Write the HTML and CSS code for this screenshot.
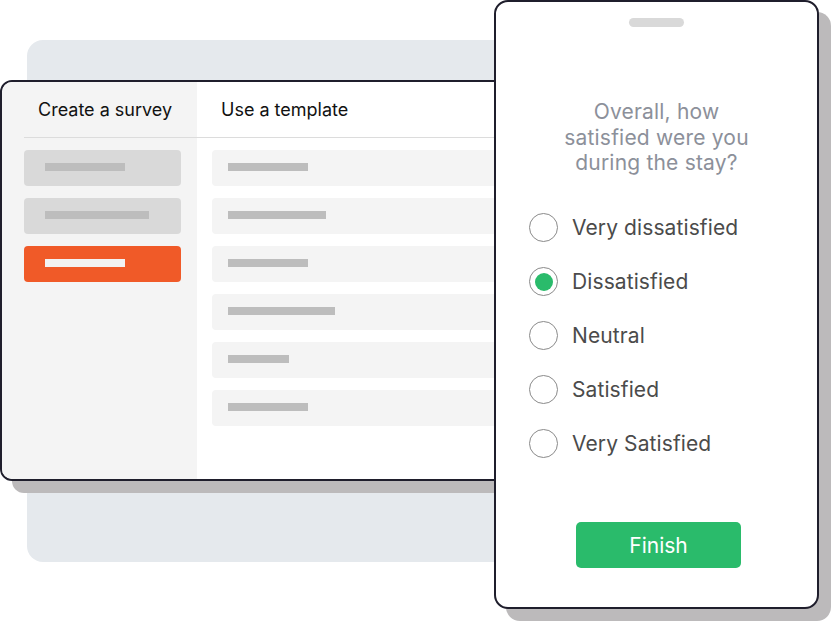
FILE: index.html
```html
<!DOCTYPE html>
<html lang="en">
<head>
    <meta charset="UTF-8">
    <meta name="viewport" content="width=device-width, initial-scale=1.0">
    <title>Survey builder</title>
    <link rel="stylesheet" href="styles.css">
</head>
<body>
    <div class="stage">
        <div class="backdrop"></div>

        <div class="window">
            <div class="col col-create">
                <div class="col-head">Create a survey</div>
                <div class="list">
                    <div class="item"><span class="bar" style="width: 80px"></span></div>
                    <div class="item"><span class="bar" style="width: 104px"></span></div>
                    <div class="item active"><span class="bar" style="width: 80px"></span></div>
                </div>
            </div>
            <div class="col col-template">
                <div class="col-head">Use a template</div>
                <div class="list">
                    <div class="item"><span class="bar" style="width: 80px"></span></div>
                    <div class="item"><span class="bar" style="width: 98px"></span></div>
                    <div class="item"><span class="bar" style="width: 80px"></span></div>
                    <div class="item"><span class="bar" style="width: 107px"></span></div>
                    <div class="item"><span class="bar" style="width: 61px"></span></div>
                    <div class="item"><span class="bar" style="width: 80px"></span></div>
                </div>
            </div>
        </div>

        <div class="phone">
            <div class="handle"></div>
            <p class="question">Overall, how<br>satisfied were you<br>during the stay?</p>
            <ul class="options">
                <li class="option"><span class="radio"></span>Very dissatisfied</li>
                <li class="option"><span class="radio checked"></span>Dissatisfied</li>
                <li class="option"><span class="radio"></span>Neutral</li>
                <li class="option"><span class="radio"></span>Satisfied</li>
                <li class="option"><span class="radio"></span>Very Satisfied</li>
            </ul>
            <button class="finish">Finish</button>
        </div>
    </div>
</body>
</html>
```

FILE: styles.css
```css
body {
    margin: 0;
    font-family: Inter, "Noto Sans", Arial, sans-serif;
    background: white;
}
.stage {
    position: relative;
    width: 831px;
    height: 623px;
    overflow: hidden;
}
.backdrop {
    position: absolute;
    left: 27px;
    top: 40px;
    width: 520px;
    height: 522px;
    background-color: #e5e9ed;
    border-radius: 16px;
}
.window {
    position: absolute;
    left: 0;
    top: 80px;
    width: 540px;
    height: 397px;
    display: grid;
    grid-template-columns: 195px 1fr;
    background-color: white;
    border: 2px solid #1f1e2c;
    border-radius: 12px;
    box-shadow: 12px 12px 0 #bcbabb;
    overflow: hidden;
}
.col-create {
    background-color: #f4f4f4;
}
.col-head {
    height: 55px;
    display: flex;
    align-items: center;
    border-bottom: 1px solid #dcdcdc;
    font-size: 18px;
    color: #111;
}
.col-create .col-head {
    margin-left: 22px;
    padding-left: 14px;
}
.col-template .col-head {
    padding-left: 24px;
}
.list {
    display: flex;
    flex-direction: column;
    gap: 12px;
    padding-top: 12px;
}
.col-create .list {
    padding-left: 22px;
    padding-right: 16px;
}
.col-template .list {
    padding-left: 15px;
}
.item {
    height: 36px;
    display: flex;
    align-items: center;
    border-radius: 4px;
    background-color: #f4f4f4;
    padding-left: 16px;
}
.col-create .item {
    background-color: #d9d9d9;
    padding-left: 21px;
}
.col-create .item.active {
    background-color: #f05a28;
}
.bar {
    height: 8px;
    margin-top: -2px;
    background-color: #bdbdbd;
}
.item.active .bar {
    background-color: #f2f2f2;
}
.phone {
    position: absolute;
    left: 494px;
    top: 0;
    width: 321px;
    height: 605px;
    display: flex;
    flex-direction: column;
    align-items: center;
    background-color: white;
    border: 2px solid #1f1e2c;
    border-radius: 14px;
    box-shadow: 12px 12px 0 #bcbabb;
}
.handle {
    width: 55px;
    height: 9px;
    margin-top: 16px;
    border-radius: 5px;
    background-color: #d9d9d9;
}
.question {
    margin: 72px 0 0;
    font-size: 21px;
    line-height: 25.5px;
    letter-spacing: 0.2px;
    text-align: center;
    color: #8c909a;
}
.options {
    list-style: none;
    margin: 37px 0 0;
    padding: 0 0 0 33px;
    align-self: stretch;
    display: flex;
    flex-direction: column;
    gap: 24px;
}
.option {
    display: flex;
    align-items: center;
    gap: 14px;
    height: 30px;
    font-size: 21px;
    letter-spacing: 0.1px;
    color: #4b4b4b;
}
.radio {
    width: 27px;
    height: 27px;
    border: 1.5px solid #8a8a8a;
    border-radius: 50%;
    display: flex;
    align-items: center;
    justify-content: center;
    flex-shrink: 0;
}
.radio.checked::after {
    content: "";
    width: 18px;
    height: 18px;
    border-radius: 50%;
    background-color: #2abb6b;
}
.finish {
    margin-top: 63px;
    margin-left: 4px;
    width: 165px;
    height: 46px;
    padding-top: 3px;
    border: none;
    border-radius: 5px;
    background-color: #2abb6b;
    color: white;
    font-family: inherit;
    font-size: 21px;
}
```
